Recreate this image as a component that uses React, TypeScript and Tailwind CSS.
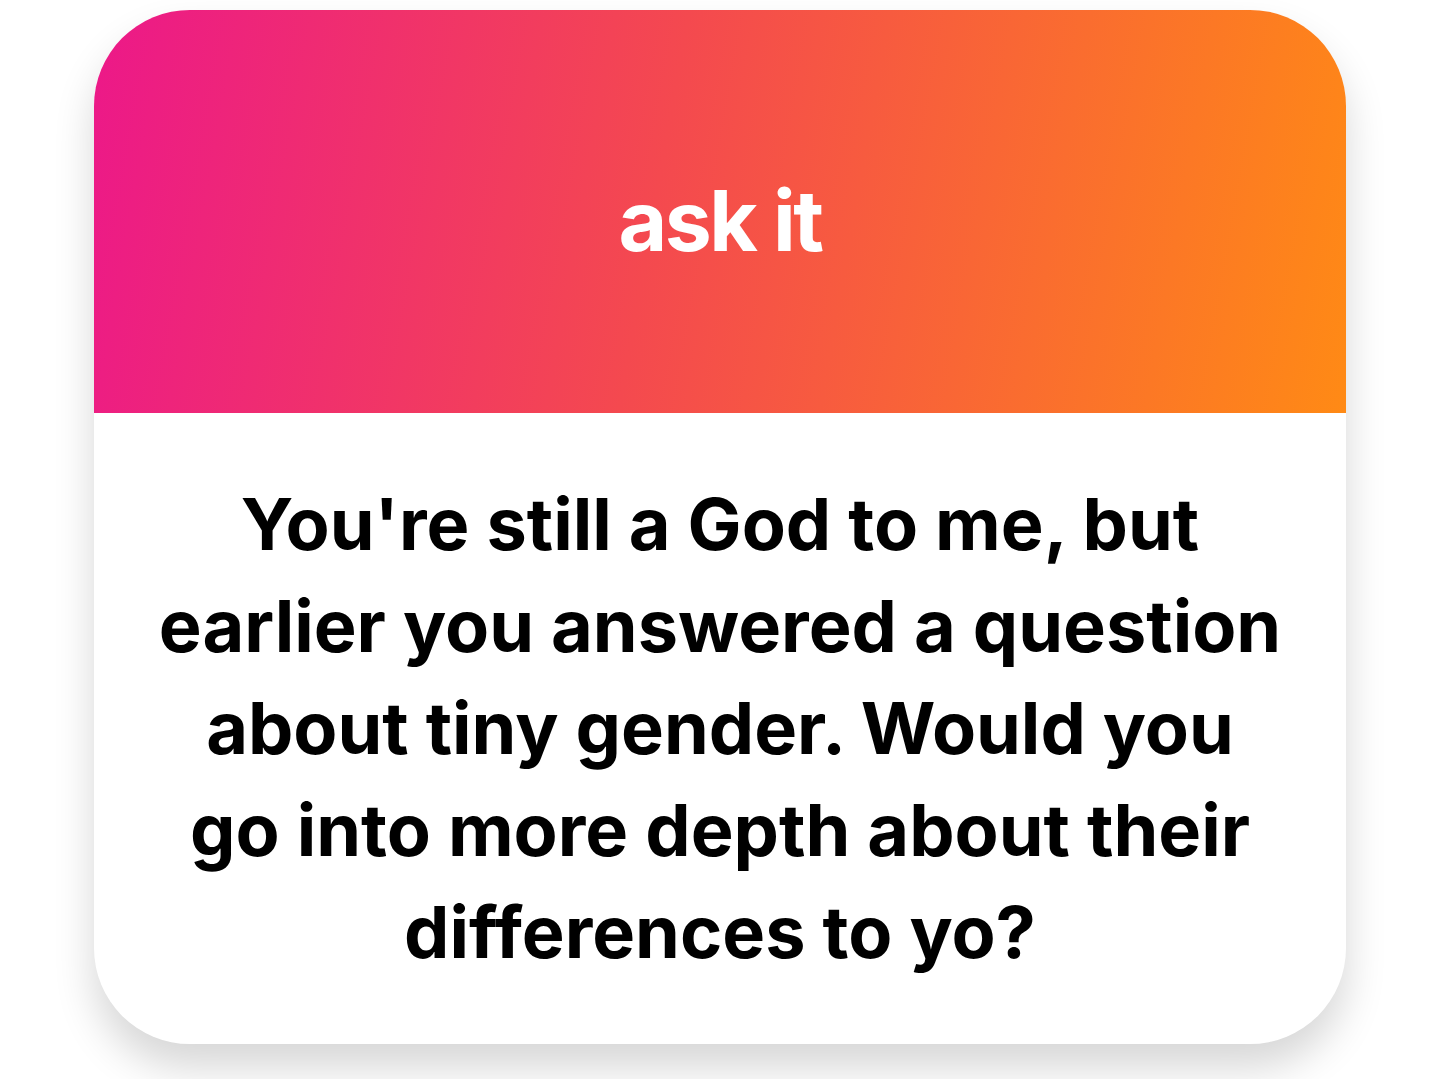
import React from "react";

export default function App() {
  return (
    <div className="min-h-[1079px] w-[1440px] bg-white pt-[10px]" style={{ fontFamily: "Inter, 'Noto Sans', sans-serif" }}>
      <div className="mx-[94px] h-[1034px] w-[1252px] overflow-hidden rounded-[96px] bg-white shadow-[0_24px_40px_rgba(0,0,0,0.16)]">
        <div className="flex h-[403px] items-center justify-center bg-[linear-gradient(100deg,#ec1889_0%,#f4494f_45%,#ff8a15_100%)]">
          <h1 className="pt-[18px] text-[84px] font-bold leading-none tracking-[-0.03em] text-white">ask it</h1>
        </div>
        <div className="flex justify-center pt-[60px]">
          <p className="whitespace-nowrap text-center text-[72px] font-bold leading-[102px] tracking-[0em] text-black">
            You're still a God to me, but
            <br />
            earlier you answered a question
            <br />
            about tiny gender. Would you
            <br />
            go into more depth about their
            <br />
            differences to yo?
          </p>
        </div>
      </div>
    </div>
  );
}
